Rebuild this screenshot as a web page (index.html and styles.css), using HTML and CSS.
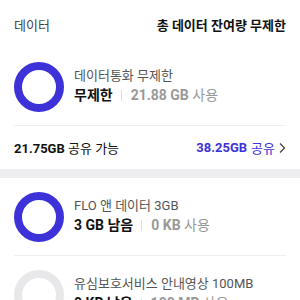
FILE: index.html
```html
<!DOCTYPE html>
<html lang="ko">
<head>
    <meta charset="UTF-8">
    <meta name="viewport" content="width=device-width, initial-scale=1.0">
    <title>데이터</title>
    <link rel="stylesheet" href="styles.css">
</head>
<body>
    <div class="header">
        <span class="header-title">데이터</span>
        <span class="header-total">총 데이터 잔여량 무제한</span>
    </div>

    <div class="section">
        <div class="plan">
            <div class="ring"></div>
            <div class="plan-info">
                <div class="plan-name">데이터통화 무제한</div>
                <div class="plan-usage">
                    <span class="remain">무제한</span>
                    <span class="sep"></span>
                    <span class="used"><b>21.88 GB</b> 사용</span>
                </div>
            </div>
        </div>
        <div class="share">
            <span class="share-left"><b>21.75GB</b> 공유 가능</span>
            <span class="share-right"><b>38.25GB</b> 공유
                <svg width="8" height="12" viewBox="0 0 8 12"><path d="M2 1.5 L6.5 6 L2 10.5" fill="none" stroke="#444" stroke-width="1.3"/></svg>
            </span>
        </div>
    </div>

    <div class="band"></div>

    <div class="section">
        <div class="plan">
            <div class="ring"></div>
            <div class="plan-info">
                <div class="plan-name">FLO 앤 데이터 3GB</div>
                <div class="plan-usage">
                    <span class="remain">3 GB 남음</span>
                    <span class="sep"></span>
                    <span class="used"><b>0 KB</b> 사용</span>
                </div>
            </div>
        </div>
        <div class="plan">
            <div class="ring empty"></div>
            <div class="plan-info">
                <div class="plan-name">유심보호서비스 안내영상 100MB</div>
                <div class="plan-usage">
                    <span class="remain">0 KB 남음</span>
                    <span class="sep"></span>
                    <span class="used"><b>100 MB</b> 사용</span>
                </div>
            </div>
        </div>
    </div>
</body>
</html>
```

FILE: styles.css
```css
body {
    margin: 0;
    font-family: Roboto, 'Noto Sans CJK KR', sans-serif;
    background: #fff;
    color: #111;
    height: 300px;
    overflow: hidden;
}

.header {
    height: 48px;
    padding: 0 14px;
    display: flex;
    align-items: center;
    justify-content: space-between;
    font-size: 13px;
}

.header-title {
    color: #444;
}

.header-total {
    font-weight: 700;
    color: #111;
}

.section {
    padding: 0 14px;
}

.plan {
    display: flex;
    align-items: center;
    gap: 10px;
    padding: 14px 0 13px;
    border-bottom: 1px solid #efeff1;
}

.plan:last-child {
    border-bottom: none;
}

.ring {
    width: 34px;
    height: 34px;
    border: 8px solid #3c32d8;
    border-radius: 50%;
    flex-shrink: 0;
}

.ring.empty {
    border-color: #e8e8ea;
}

.plan-info {
    display: flex;
    flex-direction: column;
    gap: 1px;
    margin-bottom: 3px;
}

.plan-name {
    font-size: 13px;
    line-height: 18px;
    color: #555;
}

.plan-usage {
    display: flex;
    align-items: center;
    font-size: 14px;
    line-height: 19px;
}

.remain {
    font-weight: 700;
    color: #111;
}

.sep {
    width: 1px;
    height: 11px;
    background: #ddd;
    margin: 0 9px 0 8px;
}

.used {
    color: #999;
}

.used b {
    font-weight: 700;
}

.share {
    height: 43px;
    display: flex;
    align-items: center;
    justify-content: space-between;
    font-size: 13px;
}

.share-left b {
    font-weight: 700;
}

.share-right {
    color: #3c32d8;
    display: flex;
    align-items: center;
    gap: 3px;
}

.share-right b {
    font-weight: 700;
    margin-right: 1px;
}

.band {
    height: 9px;
    background: #eeeef0;
}
```
